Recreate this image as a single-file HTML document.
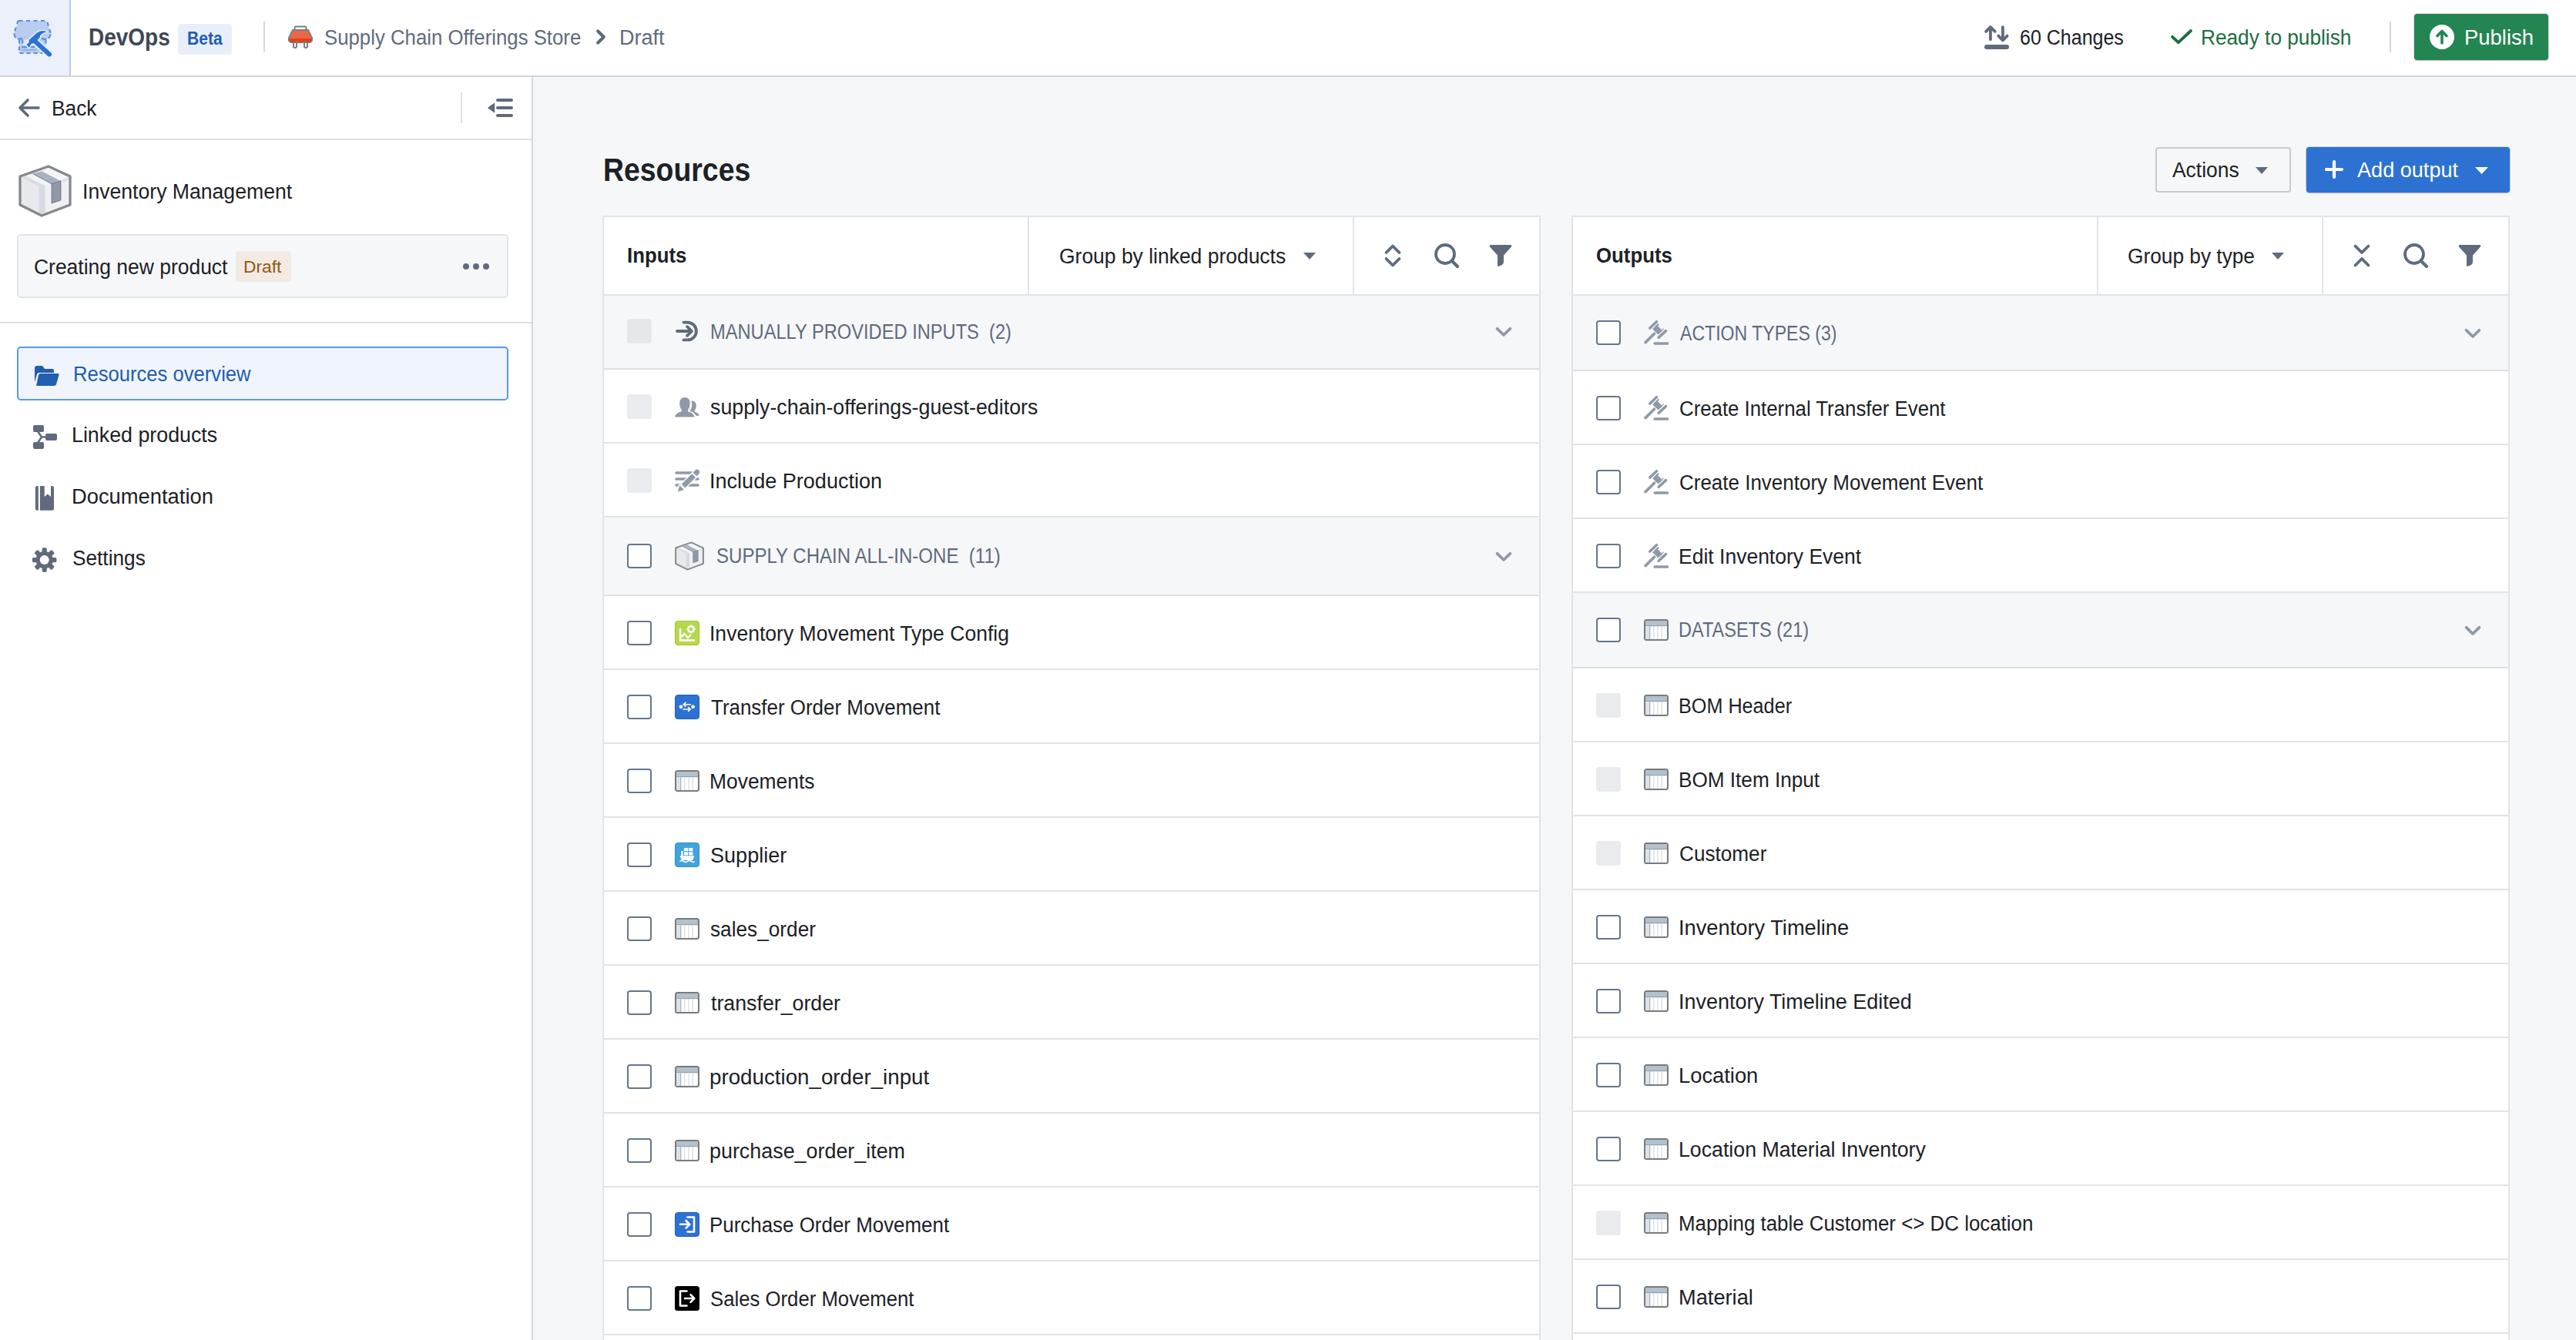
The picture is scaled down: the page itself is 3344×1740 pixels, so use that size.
<!DOCTYPE html>
<html><head><meta charset="utf-8"><title>DevOps</title>
<style>
html,body{margin:0;padding:0;width:3344px;height:1740px;overflow:hidden;background:#f6f7f9;font-family:"Liberation Sans", sans-serif;}
.a{position:absolute;display:block;}
.t{position:absolute;white-space:nowrap;line-height:1;transform-origin:0 0;}
@media (max-width: 2400px) { html { zoom: 0.5; } }
</style></head><body>
<div class="a" style="left:0px;top:0px;width:3344px;height:98px;background:#fff"></div>
<div class="a" style="left:0px;top:98px;width:3344px;height:2px;background:#d0d5dc"></div>
<div class="a" style="left:0px;top:0px;width:90px;height:98px;background:#ebf0fa"></div>
<div class="a" style="left:90px;top:0px;width:2px;height:98px;background:#b7cdf0"></div>
<svg class="a" style="left:10px;top:20px;" width="70" height="60" viewBox="0 0 70 60">
<path d="M14.5 7 H50 L55.8 23.3 Q56.2 30.8 49.5 30.8 V49 H15 V30.8 Q8 30.8 8.2 23.3 Z" fill="#b9cdf0"/>
<path d="M19.5 31.5 H38 V39 H19.5Z" fill="#dfe8f8"/>
<g fill="none" stroke="#5a8fdd" stroke-width="2.2">
<path d="M14.5 7 H50 Q51 7 51.3 8 L55.8 23.3 M14.5 7 Q13.5 7 13.2 8 L8.2 23.3" stroke-dasharray="5 4.5"/>
<path d="M8.3 23.3 Q8.8 30.5 14.8 30.5 Q20.5 30.5 21.9 28.2" stroke-dasharray="6 3"/>
<path d="M44.3 29.6 Q46 31 49.3 30.9 Q55 30.6 55.8 23.3" stroke-dasharray="6 3"/>
<path d="M15 31.5 V49 H46" stroke-dasharray="5 4"/>
<path d="M49.5 31.5 V39" stroke-dasharray="5 3"/>
<path d="M19.2 31.5 V38" stroke-dasharray="5 3"/>
<path d="M18 41 H38" stroke-dasharray="7 3"/>
</g>
<path d="M18 44.8 H38" stroke="#8fb0e6" stroke-width="2"/>
<path d="M36.5 34.5 L54 50.5" stroke="#ebf0fa" stroke-width="9.5" stroke-linecap="round"/>
<path d="M24.5 38 L28 34.5 L27.5 32 L37.5 23 Q44 18 50.5 21.5 Q44.5 22.5 42 26.5 L41.5 29 L39.5 31 L36 34.5 L33 36.5 L31 36.5 L29 39.5 L28 42 Z" fill="#2d72d2" stroke="#ebf0fa" stroke-width="2.8" stroke-linejoin="round"/>
<path d="M36.5 34.5 L54 50.5" stroke="#2d72d2" stroke-width="6" stroke-linecap="round"/>
<path d="M24.5 38 L28 34.5 L27.5 32 L37.5 23 Q44 18 50.5 21.5 Q44.5 22.5 42 26.5 L41.5 29 L39.5 31 L36 34.5 L33 36.5 L31 36.5 L29 39.5 L28 42 Z" fill="#2d72d2"/>
</svg>
<div class="t" id="t1" style="left:114.94px;top:33.06px;font-size:30.52px;color:#404854;font-weight:700;transform:scaleX(0.9167);">DevOps</div>
<div class="a" style="left:231px;top:31px;width:70px;height:40px;background:#e9effa;border-radius:4px"></div>
<div class="t" id="t2" style="left:242.99px;top:39.14px;font-size:23.11px;color:#215db0;font-weight:700;transform:scaleX(0.9104);">Beta</div>
<div class="a" style="left:342px;top:28px;width:2px;height:39px;background:#d3d8de"></div>
<svg class="a" style="left:372px;top:32px;" width="36" height="32" viewBox="0 0 36 32">
<rect x="10.5" y="2.5" width="15" height="5" rx="1.5" fill="none" stroke="#7b7e82" stroke-width="2"/>
<path d="M8 7 H28 L33 17 Q34 22 30 23 L6 23 Q2 22 3 17 Z" fill="#eb6847" stroke="#7b7e82" stroke-width="2"/>
<path d="M3.5 18 H32.5 Q33 23 29 23 Q25 24 23 21 Q21 24 18 24 Q15 24 13 21 Q11 24 7 23 Q3 23 3.5 18Z" fill="#d9441c"/>
<path d="M9 23 V29 Q11 31 13 29 V23 M23 23 V29 Q25 31 27 29 V23" fill="none" stroke="#7b7e82" stroke-width="2"/>
</svg>
<div class="t" id="t3" style="left:420.53px;top:34.62px;font-size:27.62px;color:#5f6b7c;font-weight:400;transform:scaleX(0.9333);">Supply Chain Offerings Store</div>
<svg class="a" style="left:766px;top:36px;" width="24" height="24" viewBox="0 0 24 24"><path d="M10.2 4.5 L17.8 12 L10.2 19.5" fill="none" stroke="#5f6b7c" stroke-width="4.2" stroke-linecap="round" stroke-linejoin="round"/></svg>
<div class="t" id="t4" style="left:803.96px;top:34.62px;font-size:27.62px;color:#5f6b7c;font-weight:400;transform:scaleX(0.9781);">Draft</div>
<svg class="a" style="left:2574px;top:30px;" width="36" height="36" viewBox="0 0 36 36">
<path d="M9.9 21.2 V5.2 M4.1 10.8 L9.9 5 L15.7 10.8" fill="none" stroke="#5f6b7c" stroke-width="3.8" stroke-linecap="round" stroke-linejoin="round"/>
<path d="M25.9 5.2 V21 M20.2 16.6 L25.9 22.3 L31.6 16.6" fill="none" stroke="#5f6b7c" stroke-width="3.8" stroke-linecap="round" stroke-linejoin="round"/>
<rect x="2" y="28.1" width="32" height="5.9" rx="2.95" fill="#5f6b7c"/>
</svg>
<div class="t" id="t5" style="left:2622.06px;top:34.92px;font-size:27.62px;color:#1c2127;font-weight:400;transform:scaleX(0.9056);">60 Changes</div>
<svg class="a" style="left:2815px;top:35px;" width="34" height="26" viewBox="0 0 34 26"><path d="M5 12.8 L12.8 20.2 L29 5" fill="none" stroke="#1c6e42" stroke-width="3.8" stroke-linecap="round" stroke-linejoin="round"/></svg>
<div class="t" id="t6" style="left:2857.02px;top:34.92px;font-size:27.62px;color:#1c6e42;font-weight:400;transform:scaleX(0.9501);">Ready to publish</div>
<div class="a" style="left:3102px;top:28px;width:2px;height:40px;background:#d3d8de"></div>
<div class="a" style="left:3134px;top:18px;width:174px;height:60px;background:#238551;border-radius:4px;box-shadow:0 0 0 1px rgba(17,20,24,.1),0 1px 2px rgba(17,20,24,.2)"></div>
<svg class="a" style="left:3154px;top:32px;" width="32" height="32" viewBox="0 0 32 32"><circle cx="16" cy="16" r="16" fill="#fff"/><path d="M16 24 V9 M10 14.5 L16 8.5 L22 14.5" fill="none" stroke="#238551" stroke-width="3.6" stroke-linecap="round" stroke-linejoin="round"/></svg>
<div class="t" id="t7" style="left:3198.93px;top:34.92px;font-size:27.62px;color:#fff;font-weight:400;transform:scaleX(0.9947);">Publish</div>
<div class="a" style="left:0px;top:100px;width:690px;height:1640px;background:#fff"></div>
<div class="a" style="left:690px;top:100px;width:2px;height:1640px;background:#d3d8de"></div>
<div class="a" style="left:0px;top:180px;width:690px;height:2px;background:#dce0e5"></div>
<svg class="a" style="left:22px;top:126px;" width="32" height="28" viewBox="0 0 32 28"><path d="M28 14 H5 M14 4 L4 14 L14 24" fill="none" stroke="#5f6b7c" stroke-width="3.6" stroke-linecap="round" stroke-linejoin="round"/></svg>
<div class="t" id="t8" style="left:67.02px;top:126.82px;font-size:27.62px;color:#1c2127;font-weight:400;transform:scaleX(0.9518);">Back</div>
<div class="a" style="left:598px;top:120px;width:2px;height:40px;background:#dce0e5"></div>
<svg class="a" style="left:632px;top:126px;" width="36" height="28" viewBox="0 0 36 28">
<rect x="12" y="2" width="22" height="4" rx="2" fill="#5f6b7c"/>
<rect x="12" y="12" width="22" height="4" rx="2" fill="#5f6b7c"/>
<rect x="12" y="22" width="22" height="4" rx="2" fill="#5f6b7c"/>
<path d="M9.5 8.5 L2 14 L9.5 19.5 Z" fill="#5f6b7c" stroke="#5f6b7c" stroke-width="1.5" stroke-linejoin="round"/>
</svg>
<svg class="a" style="left:20px;top:210px;" width="80" height="80" viewBox="0 0 80 80">
<path d="M43 7.5 L69.5 19.5 L34 33 L7.5 19.5 Z" fill="#f4f5f7"/>
<path d="M7.5 19.5 L34 33 L34 68.5 L7.5 55.5 Z" fill="#e7e9ec"/>
<path d="M34 33 L69.5 19.5 L69.5 55.5 L34 68.5 Z" fill="#eef0f2"/>
<path d="M30.5 33 L38.5 31 L38.5 67 L30.5 67 Z" fill="#d6dbe2"/>
<path d="M8 20.5 L33 33.5 L38.5 31 L13 18.3 Z" fill="#dadee4"/>
<path d="M60 23.5 L69.5 19.5 L69.5 24 L 62 27 Z" fill="#dde1e6"/>
<path d="M22.7 15.5 L34 12.2 L58.8 25 L47.2 28.7 Z" fill="#a9b2bf"/>
<path d="M22.7 15.5 L47.2 28.7" stroke="#7d8a9c" stroke-width="1.2"/>
<path d="M47.2 28.7 L58.8 25 L58.8 49.9 L47.2 53.7 Z" fill="#8f99a8" stroke="#6f7d8f" stroke-width="1.2"/>
<path d="M43 6 L71 19 L71 56 L34 70 L6 56 L6 19 Z" fill="none" stroke="#86888c" stroke-width="3.3" stroke-linejoin="round"/>
</svg>
<div class="t" id="t9" style="left:106.99px;top:235.22px;font-size:27.62px;color:#1c2127;font-weight:400;transform:scaleX(0.9636);">Inventory Management</div>
<div class="a" style="left:22px;top:304px;width:638px;height:83px;background:#f6f7f9;border:2px solid #e1e4e8;border-radius:5px;box-sizing:border-box"></div>
<div class="t" id="t10" style="left:43.50px;top:333.12px;font-size:27.62px;color:#1c2127;font-weight:400;transform:scaleX(0.9581);">Creating new product</div>
<div class="a" style="left:306px;top:326px;width:72px;height:40px;background:#f2eae3;border-radius:4px"></div>
<div class="t" id="t11" style="left:316.42px;top:334.76px;font-size:22.97px;color:#935610;font-weight:400;transform:scaleX(0.9915);">Draft</div>
<svg class="a" style="left:600px;top:338px;" width="36" height="16" viewBox="0 0 36 16"><circle cx="5" cy="8" r="4" fill="#5f6b7c"/><circle cx="18" cy="8" r="4" fill="#5f6b7c"/><circle cx="31" cy="8" r="4" fill="#5f6b7c"/></svg>
<div class="a" style="left:0px;top:418px;width:690px;height:2px;background:#dce0e5"></div>
<div class="a" style="left:22px;top:450px;width:638px;height:70px;background:#f0f5fd;border:2px solid #5b97ee;border-radius:5px;box-sizing:border-box"></div>
<svg class="a" style="left:42px;top:472px;" width="36" height="32" viewBox="0 0 36 32"><path d="M3 6 Q3 3 6 3 H13 L16 7 H26 Q28 7 28 10 V12 H9 Q6.5 12 6 14 L3 24 Z" fill="#215db0"/><path d="M8 15 Q8.5 13 11 13 H33 Q35 13 34.5 15 L31 27 Q30.5 29 28 29 H5 Z" fill="#215db0"/></svg>
<div class="t" id="t12" style="left:95.07px;top:471.62px;font-size:27.62px;color:#215db0;font-weight:400;transform:scaleX(0.9276);">Resources overview</div>
<svg class="a" style="left:40px;top:549px;" width="36" height="36" viewBox="0 0 36 36">
<rect x="3" y="3" width="14" height="9" rx="2" fill="#5f6b7c"/>
<rect x="3" y="25" width="14" height="9" rx="2" fill="#5f6b7c"/>
<rect x="19" y="14" width="15" height="9" rx="2" fill="#5f6b7c"/>
<path d="M9 11 L14 18.5 L9 26 M14 18.5 H20" fill="none" stroke="#5f6b7c" stroke-width="2.6"/>
</svg>
<div class="t" id="t13" style="left:92.98px;top:551.02px;font-size:27.62px;color:#1c2127;font-weight:400;transform:scaleX(0.9705);">Linked products</div>
<svg class="a" style="left:44px;top:629px;" width="30" height="36" viewBox="0 0 30 36"><path d="M4.5 2 H5.8 V33.8 H4.5 Q1.9 33.8 1.9 31.2 V4.6 Q1.9 2 4.5 2Z" fill="#5f6b7c"/><path d="M7.9 2 H13.7 V16.1 L17.8 12.4 L22 16.1 V2 H23.5 Q26 2 26 4.5 V31.3 Q26 33.8 23.5 33.8 H7.9 Z" fill="#5f6b7c"/></svg>
<div class="t" id="t14" style="left:92.94px;top:631.02px;font-size:27.62px;color:#1c2127;font-weight:400;transform:scaleX(0.9902);">Documentation</div>
<svg class="a" style="left:40px;top:709px;" width="36" height="36" viewBox="0 0 36 36"><g transform="translate(17.7 18.1)" fill="#5f6b7c"><rect x="-3.1" y="-15.8" width="6.2" height="8" rx="1.8" transform="rotate(0)"/><rect x="-3.1" y="-15.8" width="6.2" height="8" rx="1.8" transform="rotate(45)"/><rect x="-3.1" y="-15.8" width="6.2" height="8" rx="1.8" transform="rotate(90)"/><rect x="-3.1" y="-15.8" width="6.2" height="8" rx="1.8" transform="rotate(135)"/><rect x="-3.1" y="-15.8" width="6.2" height="8" rx="1.8" transform="rotate(180)"/><rect x="-3.1" y="-15.8" width="6.2" height="8" rx="1.8" transform="rotate(225)"/><rect x="-3.1" y="-15.8" width="6.2" height="8" rx="1.8" transform="rotate(270)"/><rect x="-3.1" y="-15.8" width="6.2" height="8" rx="1.8" transform="rotate(315)"/><circle r="11.2"/><circle r="6" fill="#fff"/></g></svg>
<div class="t" id="t15" style="left:94.01px;top:710.62px;font-size:27.62px;color:#1c2127;font-weight:400;transform:scaleX(0.9498);">Settings</div>
<div class="a" style="left:692px;top:100px;width:2652px;height:1640px;background:#f6f7f9"></div>
<div class="t" id="t16" style="left:783.03px;top:198.75px;font-size:42.59px;color:#1c2127;font-weight:700;transform:scaleX(0.8783);">Resources</div>
<div class="a" style="left:2798px;top:191px;width:176px;height:59px;border:2px solid #c5cbd3;border-radius:4px;box-sizing:border-box;background:#f6f7f9"></div>
<div class="t" id="t17" style="left:2820.00px;top:206.11px;font-size:28.34px;color:#1c2127;font-weight:400;transform:scaleX(0.9328);">Actions</div>
<svg class="a" style="left:2927px;top:216px;" width="18" height="11" viewBox="0 0 18 11"><path d="M1 1 H17 L9 10 Z" fill="#5f6b7c"/></svg>
<div class="a" style="left:2994px;top:191px;width:264px;height:59px;background:#2d72d2;border-radius:4px;box-shadow:0 0 0 1px rgba(17,20,24,.15),0 1px 2px rgba(17,20,24,.2)"></div>
<svg class="a" style="left:3016px;top:207px;" width="28" height="27" viewBox="0 0 28 27"><path d="M14 3 V23 M4 13 H24" stroke="#fff" stroke-width="4.2" stroke-linecap="round"/></svg>
<div class="t" id="t18" style="left:3060.00px;top:206.01px;font-size:28.34px;color:#fff;font-weight:400;transform:scaleX(0.9564);">Add output</div>
<svg class="a" style="left:3212px;top:216px;" width="19" height="11" viewBox="0 0 19 11"><path d="M1 1 H18 L9.5 10 Z" fill="#fff"/></svg>
<div class="a" style="left:782px;top:280px;width:1218px;height:1460px;background:#fff;border:2px solid #e3e4e6;border-bottom:none;box-sizing:border-box"></div>
<div class="a" style="left:784px;top:382px;width:1214px;height:2px;background:#e3e4e6"></div>
<div class="a" style="left:1334px;top:282px;width:2px;height:100px;background:#e3e4e6"></div>
<div class="a" style="left:1756px;top:282px;width:2px;height:100px;background:#e3e4e6"></div>
<div class="t" id="t47" style="left:814.46px;top:319.01px;font-size:27.03px;color:#1c2127;font-weight:700;transform:scaleX(0.9545);">Inputs</div>
<div class="t" id="t48" style="left:1375.00px;top:318.62px;font-size:27.62px;color:#1c2127;font-weight:400;transform:scaleX(0.9584);">Group by linked products</div>
<svg class="a" style="left:1691px;top:327px;" width="18" height="11" viewBox="0 0 18 11"><path d="M1 1 H17 L9 10 Z" fill="#5f6b7c"/></svg>
<svg class="a" style="left:1796px;top:316px;" width="24" height="32" viewBox="0 0 24 32"><path d="M3.5 12 L12 3.5 L20.5 12 M3.5 20 L12 28.5 L20.5 20" fill="none" stroke="#5f6b7c" stroke-width="3.8" stroke-linecap="round" stroke-linejoin="round"/></svg><svg class="a" style="left:1860px;top:314px;" width="36" height="36" viewBox="0 0 36 36"><circle cx="16" cy="16" r="12" fill="none" stroke="#5f6b7c" stroke-width="3.8"/><path d="M24.5 24.5 L32 32" stroke="#5f6b7c" stroke-width="4.2" stroke-linecap="round"/></svg><svg class="a" style="left:1932px;top:316px;" width="32" height="32" viewBox="0 0 32 32"><path d="M3 2 H29 Q31 2.5 30 4.5 L20 15.5 V24 Q20 26 18 28 L13 30 Q12 30 12 29 V15.5 L2 4.5 Q1 2.5 3 2 Z" fill="#5f6b7c"/></svg>
<div class="a" style="left:784px;top:384px;width:1214px;height:94px;background:#f6f7f9"></div>
<div class="a" style="left:784px;top:478px;width:1214px;height:2px;background:#dcdfe3"></div>
<div class="a" style="left:814px;top:414px;width:32px;height:32px;background:rgba(211,216,222,.5);border-radius:4px"></div>
<svg class="a" style="left:876px;top:414px;" width="32" height="32" viewBox="0 0 32 32"><path d="M11.5 4.6 H16.5 A11.4 11.4 0 0 1 16.5 27.4 H11.5" fill="none" stroke="#5f6b7c" stroke-width="3.8" stroke-linecap="round" stroke-linejoin="round"/><path d="M3 16 H21.5 M16 10.2 L22 16 L16 21.8" fill="none" stroke="#5f6b7c" stroke-width="3.8" stroke-linecap="round" stroke-linejoin="round"/></svg>
<div class="t" id="t19" style="left:921.62px;top:416.52px;font-size:27.62px;color:#5f6b7c;font-weight:400;transform:scaleX(0.8571);">MANUALLY PROVIDED INPUTS&nbsp;&nbsp;(2)</div>
<svg class="a" style="left:1940px;top:421.5px;" width="24" height="16" viewBox="0 0 24 16"><path d="M3.6 4.8 L12 13 L20.4 4.8" fill="none" stroke="#8f99a8" stroke-width="3.8" stroke-linecap="round" stroke-linejoin="round"/></svg>
<div class="a" style="left:784px;top:480px;width:1214px;height:94px;background:#fff"></div>
<div class="a" style="left:784px;top:574px;width:1214px;height:2px;background:#e2e3e5"></div>
<div class="a" style="left:814px;top:512px;width:32px;height:32px;background:rgba(211,216,222,.5);border-radius:4px"></div>
<svg class="a" style="left:876px;top:512px;" width="32" height="32" viewBox="0 0 32 32"><path d="M13 4 Q19.8 4 19.7 12 Q19.6 17.5 17 20.5 L17.5 22.5 Q24.5 24 25.5 29.5 H0 Q1 24 8.5 22.5 L9 20.5 Q6.4 17.5 6.3 12 Q6.2 4 13 4 Z" fill="#8f99a8"/><path d="M21.5 8.3 Q27.6 8.5 27.8 14.5 Q28 19 25.6 21.4 L26 23 Q31 24 31.8 27.8 H27.3 Q25.5 23.3 19.4 21.8 Q22.2 18.5 22.2 14 Q22.2 10.5 21.5 8.3 Z" fill="#8f99a8"/></svg>
<div class="t" id="t20" style="left:921.79px;top:514.62px;font-size:27.62px;color:#1c2127;font-weight:400;transform:scaleX(0.9703);">supply-chain-offerings-guest-editors</div>
<div class="a" style="left:784px;top:576px;width:1214px;height:94px;background:#fff"></div>
<div class="a" style="left:784px;top:670px;width:1214px;height:2px;background:#e2e3e5"></div>
<div class="a" style="left:814px;top:608px;width:32px;height:32px;background:rgba(211,216,222,.5);border-radius:4px"></div>
<svg class="a" style="left:876px;top:608px;" width="32" height="32" viewBox="0 0 32 32"><g stroke="#8f99a8" stroke-width="3.6" stroke-linecap="round"><path d="M2 6 H30 M2 14 H30 M2 22 H30"/></g>
<g fill="#8f99a8" stroke="#fff" stroke-width="3" stroke-linejoin="round" paint-order="stroke fill">
<path d="M8.6 20.8 L13.4 25.5 L27 12 L22.2 7.2 Z"/>
<path d="M23.6 5.6 L26.6 2.6 Q29 0.4 31.2 2.6 Q33.4 5 31.2 7.4 L28.2 10.3 Z"/>
<path d="M3.8 30.6 L6.2 22.3 L11.8 27.9 Z"/></g></svg>
<div class="t" id="t21" style="left:920.75px;top:610.62px;font-size:27.62px;color:#1c2127;font-weight:400;transform:scaleX(0.9800);">Include Production</div>
<div class="a" style="left:784px;top:672px;width:1214px;height:100px;background:#f6f7f9"></div>
<div class="a" style="left:784px;top:772px;width:1214px;height:2px;background:#dcdfe3"></div>
<div class="a" style="left:814px;top:706px;width:32px;height:32px;border:2px solid #66768a;border-radius:4px;box-sizing:border-box;background:#fff"></div>
<svg class="a" style="left:876px;top:703px;" width="38" height="38" viewBox="4 4 69 68">
<path d="M43 7.5 L69.5 19.5 L34 33 L7.5 19.5 Z" fill="#f4f5f7"/>
<path d="M7.5 19.5 L34 33 L34 68.5 L7.5 55.5 Z" fill="#e7e9ec"/>
<path d="M34 33 L69.5 19.5 L69.5 55.5 L34 68.5 Z" fill="#eef0f2"/>
<path d="M30.5 33 L38.5 31 L38.5 67 L30.5 67 Z" fill="#d6dbe2"/>
<path d="M8 20.5 L33 33.5 L38.5 31 L13 18.3 Z" fill="#dadee4"/>
<path d="M60 23.5 L69.5 19.5 L69.5 24 L 62 27 Z" fill="#dde1e6"/>
<path d="M22.7 15.5 L34 12.2 L58.8 25 L47.2 28.7 Z" fill="#a9b2bf"/>
<path d="M22.7 15.5 L47.2 28.7" stroke="#7d8a9c" stroke-width="1.2"/>
<path d="M47.2 28.7 L58.8 25 L58.8 49.9 L47.2 53.7 Z" fill="#8f99a8" stroke="#6f7d8f" stroke-width="1.2"/>
<path d="M43 6 L71 19 L71 56 L34 70 L6 56 L6 19 Z" fill="none" stroke="#86888c" stroke-width="3.6" stroke-linejoin="round"/>
</svg>
<div class="t" id="t22" style="left:929.68px;top:708.32px;font-size:27.62px;color:#5f6b7c;font-weight:400;transform:scaleX(0.8709);">SUPPLY CHAIN ALL-IN-ONE&nbsp;&nbsp;(11)</div>
<svg class="a" style="left:1940px;top:713.5px;" width="24" height="16" viewBox="0 0 24 16"><path d="M3.6 4.8 L12 13 L20.4 4.8" fill="none" stroke="#8f99a8" stroke-width="3.8" stroke-linecap="round" stroke-linejoin="round"/></svg>
<div class="a" style="left:784px;top:774px;width:1214px;height:94px;background:#fff"></div>
<div class="a" style="left:784px;top:868px;width:1214px;height:2px;background:#e2e3e5"></div>
<div class="a" style="left:814px;top:806px;width:32px;height:32px;border:2px solid #66768a;border-radius:4px;box-sizing:border-box;background:#fff"></div>
<svg class="a" style="left:876px;top:806px;" width="32" height="32" viewBox="0 0 32 32"><rect x="0.5" y="0.5" width="31" height="31" rx="3.5" fill="#b6d94c" stroke="#9cc52c" stroke-width="1"/>
<path d="M7.2 11 V25.5 H25" fill="none" stroke="#fff" stroke-width="2.4" stroke-linecap="round"/>
<path d="M8 21.5 L12.3 17 L17 22 L21 18" fill="none" stroke="#fff" stroke-width="2.4" stroke-linejoin="miter"/>
<g transform="translate(21 11)"><circle r="3.6" fill="none" stroke="#fff" stroke-width="2.4"/>
<path d="M0 -5.5 V-3 M0 5.5 V3 M-5.5 0 H-3 M5.5 0 H3 M-3.9 -3.9 L-2.2 -2.2 M3.9 3.9 L2.2 2.2 M-3.9 3.9 L-2.2 2.2 M3.9 -3.9 L2.2 -2.2" stroke="#fff" stroke-width="2"/></g></svg>
<div class="t" id="t23" style="left:920.80px;top:808.62px;font-size:27.62px;color:#1c2127;font-weight:400;transform:scaleX(0.9612);">Inventory Movement Type Config</div>
<div class="a" style="left:784px;top:870px;width:1214px;height:94px;background:#fff"></div>
<div class="a" style="left:784px;top:964px;width:1214px;height:2px;background:#e2e3e5"></div>
<div class="a" style="left:814px;top:902px;width:32px;height:32px;border:2px solid #66768a;border-radius:4px;box-sizing:border-box;background:#fff"></div>
<svg class="a" style="left:876px;top:902px;" width="32" height="32" viewBox="0 0 32 32"><rect x="0.5" y="0.5" width="31" height="31" rx="3.5" fill="#2d72d2" stroke="#1f5fbf" stroke-width="1"/>
<circle cx="8" cy="15.8" r="2.4" fill="#fff"/><circle cx="23.6" cy="15.8" r="2.4" fill="#fff"/>
<path d="M20.5 12.8 H11.5 M14 10.3 L11.3 12.8 L14 15.3" fill="none" stroke="#fff" stroke-width="1.6" stroke-linecap="round"/>
<path d="M11 19 H20 M17.5 16.5 L20.2 19 L17.5 21.5" fill="none" stroke="#fff" stroke-width="1.6" stroke-linecap="round"/></svg>
<div class="t" id="t24" style="left:922.83px;top:904.62px;font-size:27.62px;color:#1c2127;font-weight:400;transform:scaleX(0.9394);">Transfer Order Movement</div>
<div class="a" style="left:784px;top:966px;width:1214px;height:94px;background:#fff"></div>
<div class="a" style="left:784px;top:1060px;width:1214px;height:2px;background:#e2e3e5"></div>
<div class="a" style="left:814px;top:998px;width:32px;height:32px;border:2px solid #66768a;border-radius:4px;box-sizing:border-box;background:#fff"></div>
<svg class="a" style="left:876px;top:1000px;" width="32" height="28" viewBox="0 0 32 28"><rect x="1" y="1" width="30" height="26" rx="2.5" fill="#fff" stroke="#787a7d" stroke-width="2"/>
<rect x="2" y="2" width="28" height="6.5" fill="#b3c1cc"/><rect x="2" y="8" width="28" height="1.2" fill="#8fa1b0"/>
<rect x="2" y="9.2" width="5.2" height="16.8" fill="#dde2e6"/><rect x="7" y="9.2" width="1.3" height="16.8" fill="#aab7c2"/>
<path d="M12.8 9.2 V26 M18 9.2 V26 M23.2 9.2 V26" stroke="#d7dee4" stroke-width="1.3"/></svg>
<div class="t" id="t25" style="left:920.81px;top:1000.62px;font-size:27.62px;color:#1c2127;font-weight:400;transform:scaleX(0.9565);">Movements</div>
<div class="a" style="left:784px;top:1062px;width:1214px;height:94px;background:#fff"></div>
<div class="a" style="left:784px;top:1156px;width:1214px;height:2px;background:#e2e3e5"></div>
<div class="a" style="left:814px;top:1094px;width:32px;height:32px;border:2px solid #66768a;border-radius:4px;box-sizing:border-box;background:#fff"></div>
<svg class="a" style="left:876px;top:1094px;" width="32" height="32" viewBox="0 0 32 32"><rect x="0.5" y="0.5" width="31" height="31" rx="3.5" fill="#41a4da" stroke="#2c8dc9" stroke-width="1"/>
<g fill="#fff"><rect x="12" y="7" width="5.3" height="4.2" rx="0.8"/><rect x="18.2" y="7" width="5.3" height="4.2" rx="0.8"/>
<rect x="12" y="12.2" width="5.3" height="4.2" rx="0.8"/><rect x="18.2" y="12.2" width="5.3" height="4.2" rx="0.8"/>
<rect x="8.3" y="11" width="2.4" height="7"/><path d="M6.5 17.3 H25.5 L23 23 H9 Z"/></g>
<path d="M6.5 24.5 Q9 22.5 11.5 24.5 Q14 26.5 16.5 24.5 Q19 22.5 21.5 24.5 Q24 26.5 25.5 24.5" fill="none" stroke="#fff" stroke-width="1.6"/></svg>
<div class="t" id="t26" style="left:921.78px;top:1096.62px;font-size:27.62px;color:#1c2127;font-weight:400;transform:scaleX(0.9800);">Supplier</div>
<div class="a" style="left:784px;top:1158px;width:1214px;height:94px;background:#fff"></div>
<div class="a" style="left:784px;top:1252px;width:1214px;height:2px;background:#e2e3e5"></div>
<div class="a" style="left:814px;top:1190px;width:32px;height:32px;border:2px solid #66768a;border-radius:4px;box-sizing:border-box;background:#fff"></div>
<svg class="a" style="left:876px;top:1192px;" width="32" height="28" viewBox="0 0 32 28"><rect x="1" y="1" width="30" height="26" rx="2.5" fill="#fff" stroke="#787a7d" stroke-width="2"/>
<rect x="2" y="2" width="28" height="6.5" fill="#b3c1cc"/><rect x="2" y="8" width="28" height="1.2" fill="#8fa1b0"/>
<rect x="2" y="9.2" width="5.2" height="16.8" fill="#dde2e6"/><rect x="7" y="9.2" width="1.3" height="16.8" fill="#aab7c2"/>
<path d="M12.8 9.2 V26 M18 9.2 V26 M23.2 9.2 V26" stroke="#d7dee4" stroke-width="1.3"/></svg>
<div class="t" id="t27" style="left:921.82px;top:1192.62px;font-size:27.62px;color:#1c2127;font-weight:400;transform:scaleX(0.9495);">sales_order</div>
<div class="a" style="left:784px;top:1254px;width:1214px;height:94px;background:#fff"></div>
<div class="a" style="left:784px;top:1348px;width:1214px;height:2px;background:#e2e3e5"></div>
<div class="a" style="left:814px;top:1286px;width:32px;height:32px;border:2px solid #66768a;border-radius:4px;box-sizing:border-box;background:#fff"></div>
<svg class="a" style="left:876px;top:1288px;" width="32" height="28" viewBox="0 0 32 28"><rect x="1" y="1" width="30" height="26" rx="2.5" fill="#fff" stroke="#787a7d" stroke-width="2"/>
<rect x="2" y="2" width="28" height="6.5" fill="#b3c1cc"/><rect x="2" y="8" width="28" height="1.2" fill="#8fa1b0"/>
<rect x="2" y="9.2" width="5.2" height="16.8" fill="#dde2e6"/><rect x="7" y="9.2" width="1.3" height="16.8" fill="#aab7c2"/>
<path d="M12.8 9.2 V26 M18 9.2 V26 M23.2 9.2 V26" stroke="#d7dee4" stroke-width="1.3"/></svg>
<div class="t" id="t28" style="left:922.80px;top:1288.62px;font-size:27.62px;color:#1c2127;font-weight:400;transform:scaleX(0.9687);">transfer_order</div>
<div class="a" style="left:784px;top:1350px;width:1214px;height:94px;background:#fff"></div>
<div class="a" style="left:784px;top:1444px;width:1214px;height:2px;background:#e2e3e5"></div>
<div class="a" style="left:814px;top:1382px;width:32px;height:32px;border:2px solid #66768a;border-radius:4px;box-sizing:border-box;background:#fff"></div>
<svg class="a" style="left:876px;top:1384px;" width="32" height="28" viewBox="0 0 32 28"><rect x="1" y="1" width="30" height="26" rx="2.5" fill="#fff" stroke="#787a7d" stroke-width="2"/>
<rect x="2" y="2" width="28" height="6.5" fill="#b3c1cc"/><rect x="2" y="8" width="28" height="1.2" fill="#8fa1b0"/>
<rect x="2" y="9.2" width="5.2" height="16.8" fill="#dde2e6"/><rect x="7" y="9.2" width="1.3" height="16.8" fill="#aab7c2"/>
<path d="M12.8 9.2 V26 M18 9.2 V26 M23.2 9.2 V26" stroke="#d7dee4" stroke-width="1.3"/></svg>
<div class="t" id="t29" style="left:920.70px;top:1384.62px;font-size:27.62px;color:#1c2127;font-weight:400;transform:scaleX(1.0043);">production_order_input</div>
<div class="a" style="left:784px;top:1446px;width:1214px;height:94px;background:#fff"></div>
<div class="a" style="left:784px;top:1540px;width:1214px;height:2px;background:#e2e3e5"></div>
<div class="a" style="left:814px;top:1478px;width:32px;height:32px;border:2px solid #66768a;border-radius:4px;box-sizing:border-box;background:#fff"></div>
<svg class="a" style="left:876px;top:1480px;" width="32" height="28" viewBox="0 0 32 28"><rect x="1" y="1" width="30" height="26" rx="2.5" fill="#fff" stroke="#787a7d" stroke-width="2"/>
<rect x="2" y="2" width="28" height="6.5" fill="#b3c1cc"/><rect x="2" y="8" width="28" height="1.2" fill="#8fa1b0"/>
<rect x="2" y="9.2" width="5.2" height="16.8" fill="#dde2e6"/><rect x="7" y="9.2" width="1.3" height="16.8" fill="#aab7c2"/>
<path d="M12.8 9.2 V26 M18 9.2 V26 M23.2 9.2 V26" stroke="#d7dee4" stroke-width="1.3"/></svg>
<div class="t" id="t30" style="left:920.77px;top:1480.62px;font-size:27.62px;color:#1c2127;font-weight:400;transform:scaleX(0.9736);">purchase_order_item</div>
<div class="a" style="left:784px;top:1542px;width:1214px;height:94px;background:#fff"></div>
<div class="a" style="left:784px;top:1636px;width:1214px;height:2px;background:#e2e3e5"></div>
<div class="a" style="left:814px;top:1574px;width:32px;height:32px;border:2px solid #66768a;border-radius:4px;box-sizing:border-box;background:#fff"></div>
<svg class="a" style="left:876px;top:1574px;" width="32" height="32" viewBox="0 0 32 32"><rect x="0.5" y="0.5" width="31" height="31" rx="3.5" fill="#2d72d2" stroke="#1f5fbf" stroke-width="1"/>
<path d="M16.5 6.5 H25 V25.5 H16.5" fill="none" stroke="#fff" stroke-width="2.6" stroke-linecap="round" stroke-linejoin="round"/>
<path d="M7 15.8 H19 M14.5 11 L19.3 15.8 L14.5 20.6" fill="none" stroke="#fff" stroke-width="2.6" stroke-linecap="round" stroke-linejoin="round"/></svg>
<div class="t" id="t31" style="left:920.85px;top:1576.62px;font-size:27.62px;color:#1c2127;font-weight:400;transform:scaleX(0.9387);">Purchase Order Movement</div>
<div class="a" style="left:784px;top:1638px;width:1214px;height:94px;background:#fff"></div>
<div class="a" style="left:784px;top:1732px;width:1214px;height:2px;background:#e2e3e5"></div>
<div class="a" style="left:814px;top:1670px;width:32px;height:32px;border:2px solid #66768a;border-radius:4px;box-sizing:border-box;background:#fff"></div>
<svg class="a" style="left:876px;top:1670px;" width="32" height="32" viewBox="0 0 32 32"><rect x="0" y="0" width="32" height="32" rx="3.5" fill="#000"/>
<path d="M15.5 6.5 H7 V25.5 H15.5" fill="none" stroke="#fff" stroke-width="2.6" stroke-linecap="round" stroke-linejoin="round"/>
<path d="M13 16 H25 M20.5 11.2 L25.3 16 L20.5 20.8" fill="none" stroke="#fff" stroke-width="2.6" stroke-linecap="round" stroke-linejoin="round"/></svg>
<div class="t" id="t32" style="left:921.83px;top:1672.62px;font-size:27.62px;color:#1c2127;font-weight:400;transform:scaleX(0.9318);">Sales Order Movement</div>
<div class="a" style="left:784px;top:1734px;width:1214px;height:94px;background:#fff"></div>
<div class="a" style="left:2040px;top:280px;width:1218px;height:1460px;background:#fff;border:2px solid #e3e4e6;border-bottom:none;box-sizing:border-box"></div>
<div class="a" style="left:2042px;top:382px;width:1214px;height:2px;background:#e3e4e6"></div>
<div class="a" style="left:2722px;top:282px;width:2px;height:100px;background:#e3e4e6"></div>
<div class="a" style="left:3014px;top:282px;width:2px;height:100px;background:#e3e4e6"></div>
<div class="t" id="t49" style="left:2071.89px;top:319.01px;font-size:27.03px;color:#1c2127;font-weight:700;transform:scaleX(0.9544);">Outputs</div>
<div class="t" id="t50" style="left:2762.21px;top:318.62px;font-size:27.62px;color:#1c2127;font-weight:400;transform:scaleX(0.9513);">Group by type</div>
<svg class="a" style="left:2948px;top:327px;" width="18" height="11" viewBox="0 0 18 11"><path d="M1 1 H17 L9 10 Z" fill="#5f6b7c"/></svg>
<svg class="a" style="left:3054px;top:316px;" width="24" height="32" viewBox="0 0 24 32"><path d="M3.5 3.5 L12 12 L20.5 3.5 M3.5 28.5 L12 20 L20.5 28.5" fill="none" stroke="#5f6b7c" stroke-width="3.8" stroke-linecap="round" stroke-linejoin="round"/></svg><svg class="a" style="left:3118px;top:314px;" width="36" height="36" viewBox="0 0 36 36"><circle cx="16" cy="16" r="12" fill="none" stroke="#5f6b7c" stroke-width="3.8"/><path d="M24.5 24.5 L32 32" stroke="#5f6b7c" stroke-width="4.2" stroke-linecap="round"/></svg><svg class="a" style="left:3190px;top:316px;" width="32" height="32" viewBox="0 0 32 32"><path d="M3 2 H29 Q31 2.5 30 4.5 L20 15.5 V24 Q20 26 18 28 L13 30 Q12 30 12 29 V15.5 L2 4.5 Q1 2.5 3 2 Z" fill="#5f6b7c"/></svg>
<div class="a" style="left:2042px;top:384px;width:1214px;height:96px;background:#f6f7f9"></div>
<div class="a" style="left:2042px;top:480px;width:1214px;height:2px;background:#dcdfe3"></div>
<div class="a" style="left:2072px;top:416px;width:32px;height:32px;border:2px solid #66768a;border-radius:4px;box-sizing:border-box;background:#fff"></div>
<svg class="a" style="left:2134px;top:416px;" width="32" height="32" viewBox="0 0 32 32"><g stroke="#8f99a8" stroke-linecap="round" fill="none" stroke-width="3.6">
<path d="M7.8 10 L16.5 1.8"/><path d="M19.2 22.3 L28.5 13.6"/>
<path d="M2 28.6 L13.5 17.2"/><path d="M14.2 30 H30.5"/></g>
<path d="M11.2 11.2 L16.6 5.8 L24 13.2 L18.6 18.6 Z" fill="#8f99a8"/><path d="M13.2 9.2 L18.6 3.8 L20 5.2 L14.6 10.6Z M19.8 15.6 L25.2 10.2 L26 11 L20.6 16.4Z" fill="#8f99a8"/></svg>
<div class="t" id="t33" style="left:2181.00px;top:418.62px;font-size:27.62px;color:#5f6b7c;font-weight:400;transform:scaleX(0.8359);">ACTION TYPES (3)</div>
<svg class="a" style="left:3198px;top:423.5px;" width="24" height="16" viewBox="0 0 24 16"><path d="M3.6 4.8 L12 13 L20.4 4.8" fill="none" stroke="#8f99a8" stroke-width="3.8" stroke-linecap="round" stroke-linejoin="round"/></svg>
<div class="a" style="left:2042px;top:482px;width:1214px;height:94px;background:#fff"></div>
<div class="a" style="left:2042px;top:576px;width:1214px;height:2px;background:#e2e3e5"></div>
<div class="a" style="left:2072px;top:514px;width:32px;height:32px;border:2px solid #66768a;border-radius:4px;box-sizing:border-box;background:#fff"></div>
<svg class="a" style="left:2134px;top:514px;" width="32" height="32" viewBox="0 0 32 32"><g stroke="#8f99a8" stroke-linecap="round" fill="none" stroke-width="3.6">
<path d="M7.8 10 L16.5 1.8"/><path d="M19.2 22.3 L28.5 13.6"/>
<path d="M2 28.6 L13.5 17.2"/><path d="M14.2 30 H30.5"/></g>
<path d="M11.2 11.2 L16.6 5.8 L24 13.2 L18.6 18.6 Z" fill="#8f99a8"/><path d="M13.2 9.2 L18.6 3.8 L20 5.2 L14.6 10.6Z M19.8 15.6 L25.2 10.2 L26 11 L20.6 16.4Z" fill="#8f99a8"/></svg>
<div class="t" id="t34" style="left:2180.03px;top:516.62px;font-size:27.62px;color:#1c2127;font-weight:400;transform:scaleX(0.9342);">Create Internal Transfer Event</div>
<div class="a" style="left:2042px;top:578px;width:1214px;height:94px;background:#fff"></div>
<div class="a" style="left:2042px;top:672px;width:1214px;height:2px;background:#e2e3e5"></div>
<div class="a" style="left:2072px;top:610px;width:32px;height:32px;border:2px solid #66768a;border-radius:4px;box-sizing:border-box;background:#fff"></div>
<svg class="a" style="left:2134px;top:610px;" width="32" height="32" viewBox="0 0 32 32"><g stroke="#8f99a8" stroke-linecap="round" fill="none" stroke-width="3.6">
<path d="M7.8 10 L16.5 1.8"/><path d="M19.2 22.3 L28.5 13.6"/>
<path d="M2 28.6 L13.5 17.2"/><path d="M14.2 30 H30.5"/></g>
<path d="M11.2 11.2 L16.6 5.8 L24 13.2 L18.6 18.6 Z" fill="#8f99a8"/><path d="M13.2 9.2 L18.6 3.8 L20 5.2 L14.6 10.6Z M19.8 15.6 L25.2 10.2 L26 11 L20.6 16.4Z" fill="#8f99a8"/></svg>
<div class="t" id="t35" style="left:2180.02px;top:612.62px;font-size:27.62px;color:#1c2127;font-weight:400;transform:scaleX(0.9409);">Create Inventory Movement Event</div>
<div class="a" style="left:2042px;top:674px;width:1214px;height:94px;background:#fff"></div>
<div class="a" style="left:2042px;top:768px;width:1214px;height:2px;background:#e2e3e5"></div>
<div class="a" style="left:2072px;top:706px;width:32px;height:32px;border:2px solid #66768a;border-radius:4px;box-sizing:border-box;background:#fff"></div>
<svg class="a" style="left:2134px;top:706px;" width="32" height="32" viewBox="0 0 32 32"><g stroke="#8f99a8" stroke-linecap="round" fill="none" stroke-width="3.6">
<path d="M7.8 10 L16.5 1.8"/><path d="M19.2 22.3 L28.5 13.6"/>
<path d="M2 28.6 L13.5 17.2"/><path d="M14.2 30 H30.5"/></g>
<path d="M11.2 11.2 L16.6 5.8 L24 13.2 L18.6 18.6 Z" fill="#8f99a8"/><path d="M13.2 9.2 L18.6 3.8 L20 5.2 L14.6 10.6Z M19.8 15.6 L25.2 10.2 L26 11 L20.6 16.4Z" fill="#8f99a8"/></svg>
<div class="t" id="t36" style="left:2179.00px;top:708.62px;font-size:27.62px;color:#1c2127;font-weight:400;transform:scaleX(0.9600);">Edit Inventory Event</div>
<div class="a" style="left:2042px;top:770px;width:1214px;height:96px;background:#f6f7f9"></div>
<div class="a" style="left:2042px;top:866px;width:1214px;height:2px;background:#dcdfe3"></div>
<div class="a" style="left:2072px;top:802px;width:32px;height:32px;border:2px solid #66768a;border-radius:4px;box-sizing:border-box;background:#fff"></div>
<svg class="a" style="left:2134px;top:804px;" width="32" height="28" viewBox="0 0 32 28"><rect x="1" y="1" width="30" height="26" rx="2.5" fill="#fff" stroke="#787a7d" stroke-width="2"/>
<rect x="2" y="2" width="28" height="6.5" fill="#b3c1cc"/><rect x="2" y="8" width="28" height="1.2" fill="#8fa1b0"/>
<rect x="2" y="9.2" width="5.2" height="16.8" fill="#dde2e6"/><rect x="7" y="9.2" width="1.3" height="16.8" fill="#aab7c2"/>
<path d="M12.8 9.2 V26 M18 9.2 V26 M23.2 9.2 V26" stroke="#d7dee4" stroke-width="1.3"/></svg>
<div class="t" id="t37" style="left:2179.22px;top:804.42px;font-size:27.62px;color:#5f6b7c;font-weight:400;transform:scaleX(0.8522);">DATASETS (21)</div>
<svg class="a" style="left:3198px;top:809.5px;" width="24" height="16" viewBox="0 0 24 16"><path d="M3.6 4.8 L12 13 L20.4 4.8" fill="none" stroke="#8f99a8" stroke-width="3.8" stroke-linecap="round" stroke-linejoin="round"/></svg>
<div class="a" style="left:2042px;top:868px;width:1214px;height:94px;background:#fff"></div>
<div class="a" style="left:2042px;top:962px;width:1214px;height:2px;background:#e2e3e5"></div>
<div class="a" style="left:2072px;top:900px;width:32px;height:32px;background:rgba(211,216,222,.5);border-radius:4px"></div>
<svg class="a" style="left:2134px;top:902px;" width="32" height="28" viewBox="0 0 32 28"><rect x="1" y="1" width="30" height="26" rx="2.5" fill="#fff" stroke="#787a7d" stroke-width="2"/>
<rect x="2" y="2" width="28" height="6.5" fill="#b3c1cc"/><rect x="2" y="8" width="28" height="1.2" fill="#8fa1b0"/>
<rect x="2" y="9.2" width="5.2" height="16.8" fill="#dde2e6"/><rect x="7" y="9.2" width="1.3" height="16.8" fill="#aab7c2"/>
<path d="M12.8 9.2 V26 M18 9.2 V26 M23.2 9.2 V26" stroke="#d7dee4" stroke-width="1.3"/></svg>
<div class="t" id="t38" style="left:2179.10px;top:902.62px;font-size:27.62px;color:#1c2127;font-weight:400;transform:scaleX(0.9126);">BOM Header</div>
<div class="a" style="left:2042px;top:964px;width:1214px;height:94px;background:#fff"></div>
<div class="a" style="left:2042px;top:1058px;width:1214px;height:2px;background:#e2e3e5"></div>
<div class="a" style="left:2072px;top:996px;width:32px;height:32px;background:rgba(211,216,222,.5);border-radius:4px"></div>
<svg class="a" style="left:2134px;top:998px;" width="32" height="28" viewBox="0 0 32 28"><rect x="1" y="1" width="30" height="26" rx="2.5" fill="#fff" stroke="#787a7d" stroke-width="2"/>
<rect x="2" y="2" width="28" height="6.5" fill="#b3c1cc"/><rect x="2" y="8" width="28" height="1.2" fill="#8fa1b0"/>
<rect x="2" y="9.2" width="5.2" height="16.8" fill="#dde2e6"/><rect x="7" y="9.2" width="1.3" height="16.8" fill="#aab7c2"/>
<path d="M12.8 9.2 V26 M18 9.2 V26 M23.2 9.2 V26" stroke="#d7dee4" stroke-width="1.3"/></svg>
<div class="t" id="t39" style="left:2179.03px;top:998.62px;font-size:27.62px;color:#1c2127;font-weight:400;transform:scaleX(0.9470);">BOM Item Input</div>
<div class="a" style="left:2042px;top:1060px;width:1214px;height:94px;background:#fff"></div>
<div class="a" style="left:2042px;top:1154px;width:1214px;height:2px;background:#e2e3e5"></div>
<div class="a" style="left:2072px;top:1092px;width:32px;height:32px;background:rgba(211,216,222,.5);border-radius:4px"></div>
<svg class="a" style="left:2134px;top:1094px;" width="32" height="28" viewBox="0 0 32 28"><rect x="1" y="1" width="30" height="26" rx="2.5" fill="#fff" stroke="#787a7d" stroke-width="2"/>
<rect x="2" y="2" width="28" height="6.5" fill="#b3c1cc"/><rect x="2" y="8" width="28" height="1.2" fill="#8fa1b0"/>
<rect x="2" y="9.2" width="5.2" height="16.8" fill="#dde2e6"/><rect x="7" y="9.2" width="1.3" height="16.8" fill="#aab7c2"/>
<path d="M12.8 9.2 V26 M18 9.2 V26 M23.2 9.2 V26" stroke="#d7dee4" stroke-width="1.3"/></svg>
<div class="t" id="t40" style="left:2180.01px;top:1094.62px;font-size:27.62px;color:#1c2127;font-weight:400;transform:scaleX(0.9474);">Customer</div>
<div class="a" style="left:2042px;top:1156px;width:1214px;height:94px;background:#fff"></div>
<div class="a" style="left:2042px;top:1250px;width:1214px;height:2px;background:#e2e3e5"></div>
<div class="a" style="left:2072px;top:1188px;width:32px;height:32px;border:2px solid #66768a;border-radius:4px;box-sizing:border-box;background:#fff"></div>
<svg class="a" style="left:2134px;top:1190px;" width="32" height="28" viewBox="0 0 32 28"><rect x="1" y="1" width="30" height="26" rx="2.5" fill="#fff" stroke="#787a7d" stroke-width="2"/>
<rect x="2" y="2" width="28" height="6.5" fill="#b3c1cc"/><rect x="2" y="8" width="28" height="1.2" fill="#8fa1b0"/>
<rect x="2" y="9.2" width="5.2" height="16.8" fill="#dde2e6"/><rect x="7" y="9.2" width="1.3" height="16.8" fill="#aab7c2"/>
<path d="M12.8 9.2 V26 M18 9.2 V26 M23.2 9.2 V26" stroke="#d7dee4" stroke-width="1.3"/></svg>
<div class="t" id="t41" style="left:2178.94px;top:1190.62px;font-size:27.62px;color:#1c2127;font-weight:400;transform:scaleX(0.9872);">Inventory Timeline</div>
<div class="a" style="left:2042px;top:1252px;width:1214px;height:94px;background:#fff"></div>
<div class="a" style="left:2042px;top:1346px;width:1214px;height:2px;background:#e2e3e5"></div>
<div class="a" style="left:2072px;top:1284px;width:32px;height:32px;border:2px solid #66768a;border-radius:4px;box-sizing:border-box;background:#fff"></div>
<svg class="a" style="left:2134px;top:1286px;" width="32" height="28" viewBox="0 0 32 28"><rect x="1" y="1" width="30" height="26" rx="2.5" fill="#fff" stroke="#787a7d" stroke-width="2"/>
<rect x="2" y="2" width="28" height="6.5" fill="#b3c1cc"/><rect x="2" y="8" width="28" height="1.2" fill="#8fa1b0"/>
<rect x="2" y="9.2" width="5.2" height="16.8" fill="#dde2e6"/><rect x="7" y="9.2" width="1.3" height="16.8" fill="#aab7c2"/>
<path d="M12.8 9.2 V26 M18 9.2 V26 M23.2 9.2 V26" stroke="#d7dee4" stroke-width="1.3"/></svg>
<div class="t" id="t42" style="left:2178.97px;top:1286.62px;font-size:27.62px;color:#1c2127;font-weight:400;transform:scaleX(0.9763);">Inventory Timeline Edited</div>
<div class="a" style="left:2042px;top:1348px;width:1214px;height:94px;background:#fff"></div>
<div class="a" style="left:2042px;top:1442px;width:1214px;height:2px;background:#e2e3e5"></div>
<div class="a" style="left:2072px;top:1380px;width:32px;height:32px;border:2px solid #66768a;border-radius:4px;box-sizing:border-box;background:#fff"></div>
<svg class="a" style="left:2134px;top:1382px;" width="32" height="28" viewBox="0 0 32 28"><rect x="1" y="1" width="30" height="26" rx="2.5" fill="#fff" stroke="#787a7d" stroke-width="2"/>
<rect x="2" y="2" width="28" height="6.5" fill="#b3c1cc"/><rect x="2" y="8" width="28" height="1.2" fill="#8fa1b0"/>
<rect x="2" y="9.2" width="5.2" height="16.8" fill="#dde2e6"/><rect x="7" y="9.2" width="1.3" height="16.8" fill="#aab7c2"/>
<path d="M12.8 9.2 V26 M18 9.2 V26 M23.2 9.2 V26" stroke="#d7dee4" stroke-width="1.3"/></svg>
<div class="t" id="t43" style="left:2178.94px;top:1382.62px;font-size:27.62px;color:#1c2127;font-weight:400;transform:scaleX(0.9898);">Location</div>
<div class="a" style="left:2042px;top:1444px;width:1214px;height:94px;background:#fff"></div>
<div class="a" style="left:2042px;top:1538px;width:1214px;height:2px;background:#e2e3e5"></div>
<div class="a" style="left:2072px;top:1476px;width:32px;height:32px;border:2px solid #66768a;border-radius:4px;box-sizing:border-box;background:#fff"></div>
<svg class="a" style="left:2134px;top:1478px;" width="32" height="28" viewBox="0 0 32 28"><rect x="1" y="1" width="30" height="26" rx="2.5" fill="#fff" stroke="#787a7d" stroke-width="2"/>
<rect x="2" y="2" width="28" height="6.5" fill="#b3c1cc"/><rect x="2" y="8" width="28" height="1.2" fill="#8fa1b0"/>
<rect x="2" y="9.2" width="5.2" height="16.8" fill="#dde2e6"/><rect x="7" y="9.2" width="1.3" height="16.8" fill="#aab7c2"/>
<path d="M12.8 9.2 V26 M18 9.2 V26 M23.2 9.2 V26" stroke="#d7dee4" stroke-width="1.3"/></svg>
<div class="t" id="t44" style="left:2178.98px;top:1478.62px;font-size:27.62px;color:#1c2127;font-weight:400;transform:scaleX(0.9676);">Location Material Inventory</div>
<div class="a" style="left:2042px;top:1540px;width:1214px;height:94px;background:#fff"></div>
<div class="a" style="left:2042px;top:1634px;width:1214px;height:2px;background:#e2e3e5"></div>
<div class="a" style="left:2072px;top:1572px;width:32px;height:32px;background:rgba(211,216,222,.5);border-radius:4px"></div>
<svg class="a" style="left:2134px;top:1574px;" width="32" height="28" viewBox="0 0 32 28"><rect x="1" y="1" width="30" height="26" rx="2.5" fill="#fff" stroke="#787a7d" stroke-width="2"/>
<rect x="2" y="2" width="28" height="6.5" fill="#b3c1cc"/><rect x="2" y="8" width="28" height="1.2" fill="#8fa1b0"/>
<rect x="2" y="9.2" width="5.2" height="16.8" fill="#dde2e6"/><rect x="7" y="9.2" width="1.3" height="16.8" fill="#aab7c2"/>
<path d="M12.8 9.2 V26 M18 9.2 V26 M23.2 9.2 V26" stroke="#d7dee4" stroke-width="1.3"/></svg>
<div class="t" id="t45" style="left:2179.05px;top:1574.62px;font-size:27.62px;color:#1c2127;font-weight:400;transform:scaleX(0.9374);">Mapping table Customer &lt;&gt; DC location</div>
<div class="a" style="left:2042px;top:1636px;width:1214px;height:94px;background:#fff"></div>
<div class="a" style="left:2042px;top:1730px;width:1214px;height:2px;background:#e2e3e5"></div>
<div class="a" style="left:2072px;top:1668px;width:32px;height:32px;border:2px solid #66768a;border-radius:4px;box-sizing:border-box;background:#fff"></div>
<svg class="a" style="left:2134px;top:1670px;" width="32" height="28" viewBox="0 0 32 28"><rect x="1" y="1" width="30" height="26" rx="2.5" fill="#fff" stroke="#787a7d" stroke-width="2"/>
<rect x="2" y="2" width="28" height="6.5" fill="#b3c1cc"/><rect x="2" y="8" width="28" height="1.2" fill="#8fa1b0"/>
<rect x="2" y="9.2" width="5.2" height="16.8" fill="#dde2e6"/><rect x="7" y="9.2" width="1.3" height="16.8" fill="#aab7c2"/>
<path d="M12.8 9.2 V26 M18 9.2 V26 M23.2 9.2 V26" stroke="#d7dee4" stroke-width="1.3"/></svg>
<div class="t" id="t46" style="left:2178.95px;top:1670.62px;font-size:27.62px;color:#1c2127;font-weight:400;transform:scaleX(0.9864);">Material</div>
<div class="a" style="left:2042px;top:1732px;width:1214px;height:94px;background:#fff"></div>
</body></html>
